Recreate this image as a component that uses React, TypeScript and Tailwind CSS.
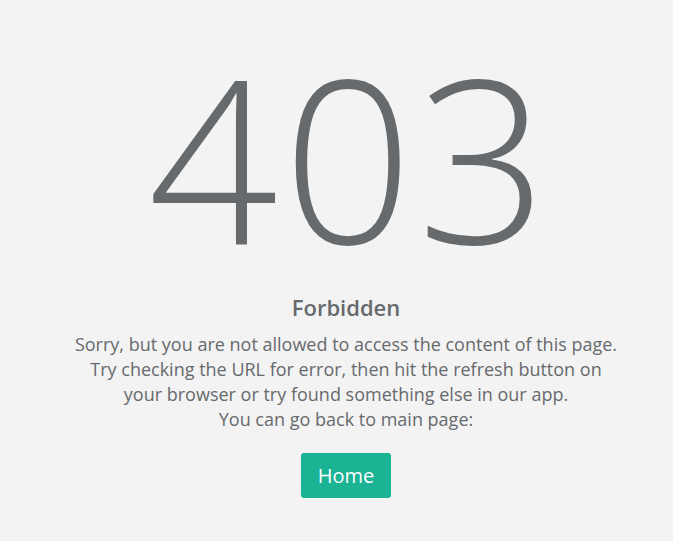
export default function App() {
  return (
    <div
      className="min-h-[541px] bg-[#f3f3f4] pl-[19px] text-[#676a6c] flex flex-col items-center text-center"
      style={{ fontFamily: '"Open Sans", sans-serif' }}
    >
      <h1 className="mt-[42px] ml-[8px] text-[228px] font-light leading-none tracking-[4.5px]">403</h1>
      <h3 className="mt-[22px] text-[22px] font-semibold leading-[30px]">Forbidden</h3>
      <div className="mt-[10px] text-[18px] leading-[25px]">
        Sorry, but you are not allowed to access the content of this page.
        <br />
        Try checking the URL for error, then hit the refresh button on
        <br />
        your browser or try found something else in our app.
        <br />
        You can go back to main page:
      </div>
      <button className="mt-[21px] h-[45px] w-[90px] rounded-[3px] bg-[#1ab394] text-[20px] text-white">
        Home
      </button>
    </div>
  );
}
